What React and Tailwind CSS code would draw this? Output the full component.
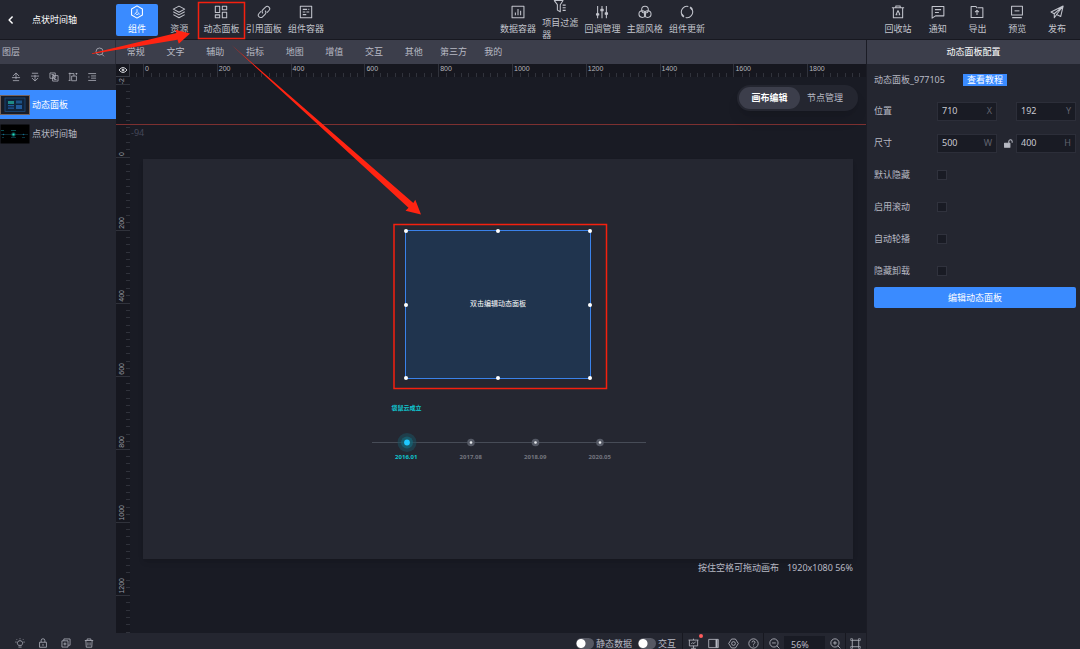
import React from 'react';

function Icon({ className = 'size-3.5', stroke = 1.2, children }) {
  return (
    <svg viewBox="0 0 16 16" className={className + ' shrink-0'} fill="none" stroke="currentColor" strokeWidth={stroke} strokeLinejoin="round" aria-hidden="true">
      {children}
    </svg>
  );
}

const glyphs = {
  component: <><path d="M8 1l6.200 3.500v7L8 15l-6.200-3.500v-7z" /><path d="M8 4.800v3.400M7.600 8L5.300 10.700M9.200 8.500l1.600 2.200M7 10.700h2.500" strokeWidth="1" /></>,
  layers: <><path d="M8 1.3l6.5 3.4L8 8.2 1.500 4.7z" /><path d="M1.500 7.8L8 11.3l6.500-3.500M1.500 11L8 14.5l6.500-3.500" /></>,
  blocks: <><path d="M1.500 1.500h5v7h-5zM9.500 1.500h5v4h-5zM1.500 11.300h5v3.200h-5zM9.500 8.300h5v6.200h-5z" /></>,
  link: <><path d="M6.8 9.6a3 3 0 0 1 0-4.2l2.9-2.9a2.7 2.7 0 0 1 4 3.8l-2.2 2.3" /><path d="M9.2 6.4a3 3 0 0 1 0 4.2l-2.9 2.9a2.700 2.700 0 0 1-4-3.800l2.200-2.300" /></>,
  container: <><path d="M1.500 1.500h13v13h-13z" /><path d="M4.300 5h5M4.300 8h3M8.500 8h3.200M4.300 11h4M10.700 5h1" /></>,
  chart: <><path d="M1.200 1.500h13.600v13H1.200z" /><path d="M5 8.500v3.200M8 4.500v7.200M11 6.500v5.200" /></>,
  filter: <><path d="M1.500 1.800h10L8.300 6.500v8L5 12.700V6.500z" /><path d="M11 7h3.500M11 10h3.500M11 13h3.500" /></>,
  sliders: <><path d="M3 1v14M8 1v14M13 1v14" /><path d="M1.700 10h2.600v1.500H1.700zM6.700 5h2.600v1.500H6.700zM11.700 9h2.600v1.500h-2.600z" fill="currentColor" /></>,
  theme: <><circle cx="8" cy="5.3" r="3.8" /><circle cx="4.900" cy="10.400" r="3.800" /><circle cx="11.100" cy="10.400" r="3.800" /></>,
  update: <><path d="M9.500 1.700A6.500 6.500 0 0 0 2 10.500M6.500 14.300A6.500 6.500 0 0 0 14 5.500" /><path d="M11.500 2.500a6.500 6.500 0 0 1 2.500 3M4.500 13.500a6.500 6.500 0 0 1-2.500-3" strokeWidth="2" /></>,
  recycle: <><path d="M1 3.200h14M5.500 3V1.200h5V3M2.700 3.400v11.200h10.600V3.400" /><path d="M8 6.300l2.200 4.900M8 6.300l-2.200 4.900h1.500M8.800 11.200h1.400" /></>,
  message: <><path d="M1.300 1.800h13.400v10.600H5.200L1.300 15z" /><path d="M4.500 5.300h7M4.500 8.500h4.500" /></>,
  exportBox: <><path d="M9.200 3.200h5.500v11H1.300V1.800h5.500l1.600 1.700" /><path d="M8 11.500V6.300M5.800 8.200L8 6l2.200 2.200" /></>,
  preview: <><path d="M1.800 1.500h12.400v10H1.800zM2.500 14.400h11" /><path d="M5.200 6.700h5.600" /></>,
  send: <><path d="M15 1.200L1.200 8l3.600 2L15 1.200l-2.800 12-4.700-2.300L15 1.200M4.900 10v4.500l2.500-3.400" /></>,
  up: <><path d="M3 6.500L8 1.500l5 5M8 2v9.500M1.500 9h13M3 13.800h10" /></>,
  down: <><path d="M3 9.500l5 5 5-5M8 14V4.500M1.500 6.500h13M3 2h10" /></>,
  group: <><path d="M1.500 1.500h8.500v8.500H1.500zM5.800 5.800h8.700v8.700H5.800z" /><path d="M4 4h3.500v3.500M12 12H8.500V8.500M6 9.800L9.800 6" /></>,
  ungroup: <><path d="M3 1v12.500M1 2.500h8.500v4M5.800 6.500h7.700V14H5.800zM1 13.500h3M13.500 1.500v3M12 2.500h3" /></>,
  list: <><path d="M2 2.500h12.500M6.500 6.300h8M6.500 9.800h8M2 13.500h12.500M2 8h2" /></>,
  search: <><circle cx="7.300" cy="7.200" r="5.600" /><path d="M11 11.500l3.300 3.300" /></>,
  bulb: <><path d="M5.800 11.800C4 10.600 3.600 8.900 3.900 7.500a4.200 4.200 0 0 1 8.200 0c.3 1.400-.1 3.100-1.900 4.300zM5.500 14.500h5M8 .5v1.500M.5 6.500h2M13.500 6.500h2M2.500 2l1 1M13.500 2l-1 1" /></>,
  lock: <><path d="M2.500 6.800h11v8h-11zM5 6.500V4.200a3 3 0 0 1 6 0v2.300M8 9.500v3" /></>,
  copy: <><path d="M1.500 4.500h9.700v10H1.500zM4.500 4.300V1.500h10v10h-3M6.300 7v5M3.800 9.500h5" /></>,
  trash: <><path d="M1.300 4h13.400M5 3.800V1.500h6v2.300M3 4.200l.6 10.500h8.800L13 4.200M6.300 7v5M9.700 7v5" /></>,
  monitor: <><path d="M.8 3h14.400M2 3v8.500h12V3M8 11.500V15M4.500 15h7M4.800 8.700l2-2 1.700 1.500 2.800-3M8 1v2" /></>,
  sidebar: <><path d="M1 2h14v12H1z" /><path d="M12.500 2v12" strokeWidth="3" /></>,
  gear: <><path d="M5.200 1.500h5.600L15 8l-4.200 6.500H5.200L1 8z" /><circle cx="8" cy="8" r="2.700" /></>,
  help: <><circle cx="8" cy="8" r="6.800" /><path d="M5.900 6.400a2.100 2.100 0 1 1 3.100 1.800c-.8.400-1 .800-1 1.500M8 11.200v1.200" /></>,
  zoomOut: <><circle cx="7.200" cy="7.200" r="6" /><path d="M11.500 11.500l3.700 3.700M4.500 7.200h5.400" /></>,
  zoomIn: <><circle cx="7.200" cy="7.200" r="6" /><path d="M11.500 11.500l3.700 3.700M4.500 7.200h5.400M7.200 4.500v5.400" /></>,
  fit: <><path d="M3.300 3.300h9.400v9.400H3.300z" /><path d="M1 1h2.600v2.600H1zM12.400 1H15v2.600h-2.600zM1 12.400h2.600V15H1zM12.400 12.400H15V15h-2.600z" strokeWidth=".9" /></>,
};

function Tool({ icon, label, active, wrap }) {
  return (
    <button className={'flex h-8 flex-col items-center justify-center ' + (active ? 'rounded-xs bg-[#3a8bff] text-white' : 'text-[#c2c4cc]')}>
      <Icon className="size-3.5">{glyphs[icon]}</Icon>
      <span className={'mt-1 leading-3 ' + (wrap ? 'w-9 text-left' : 'whitespace-nowrap')}>{label}</span>
    </button>
  );
}

const leftTools = [['component', '组件'], ['layers', '资源'], ['blocks', '动态面板'], ['link', '引用面板'], ['container', '组件容器']];
const midTools = [['chart', '数据容器'], ['filter', '项目过滤器'], ['sliders', '回调管理'], ['theme', '主题风格'], ['update', '组件更新']];
const rightTools = [['recycle', '回收站'], ['message', '通知'], ['exportBox', '导出'], ['preview', '预览'], ['send', '发布']];
const tabs = ['常规', '文字', '辅助', '指标', '地图', '增值', '交互', '其他', '第三方', '我的'];

function Header() {
  return (
    <header className="flex h-10 shrink-0 items-center overflow-hidden border-b border-[#171820] bg-[#242630]">
      <div className="flex w-[116px] shrink-0 items-center text-white">
        <button aria-label="返回" className="ml-1 flex size-3.5 items-center justify-center">
          <Icon className="size-2.5" stroke={2.4}><path d="M10.500 2.500L5 8l5.500 5.500" /></Icon>
        </button>
        <h1 className="ml-3.5">点状时间轴</h1>
      </div>
      <div className="flex grow justify-between pr-[3px]">
        <div className="grid w-[211px] grid-cols-5">
          {leftTools.map(([icon, label], i) => <Tool key={label} icon={icon} label={label} active={i === 0} />)}
        </div>
        <div className="grid w-[211px] grid-cols-5">
          {midTools.map(([icon, label]) => <Tool key={label} icon={icon} label={label} wrap={icon === 'filter'} />)}
        </div>
        <div className="grid w-[199px] grid-cols-5">
          {rightTools.map(([icon, label]) => <Tool key={label} icon={icon} label={label} />)}
        </div>
      </div>
    </header>
  );
}

function PanelThumb() {
  return (
    <svg viewBox="0 0 30 20" className="h-5 w-[30px] shrink-0" aria-hidden="true">
      <rect x=".5" y=".5" width="29" height="19" fill="#181b25" stroke="#75625c" />
      <rect x="5" y="3" width="20" height="13.500" fill="#10233c" stroke="#1c4a7c" strokeWidth=".8" />
      <path d="M8 6h6v3H8z" fill="#1f8a86" />
      <path d="M16 5.500h6v3h-6z" fill="#1c5286" />
      <path d="M8 10h6v1.300H8zM8 12.500h6v1.300H8zM16 10h6v4h-6z" fill="#225a9c" />
    </svg>
  );
}

function TimelineThumb() {
  return (
    <svg viewBox="0 0 30 20" className="h-5 w-[30px] shrink-0" aria-hidden="true">
      <rect x=".5" y=".5" width="29" height="19" fill="#000" />
      <path d="M1 10.500h27" stroke="#10343c" strokeWidth=".8" />
      <path d="M11 6.500h5M1 6.500h3" stroke="#0b4d50" strokeWidth="1" />
      <path d="M11 13.500h5M22 13.500h3M2 13.500h2" stroke="#0a3540" strokeWidth="1" />
      <circle cx="13.500" cy="10.500" r="2.200" fill="#0b4c4c" />
      <circle cx="13.500" cy="10.500" r="1.100" fill="#1fe0c0" />
      <circle cx="3.500" cy="10.500" r=".8" fill="#146a90" />
      <circle cx="23.500" cy="10.500" r=".8" fill="#146a90" />
    </svg>
  );
}

function LayerPanel() {
  return (
    <aside className="flex w-[116px] shrink-0 flex-col bg-[#242630]">
      <div className="flex h-6 items-center justify-between border-r border-[#2b2d38] bg-[#3c3e4b] pr-2.5 pl-0.5">
        <h2>图层</h2>
        <button aria-label="搜索"><Icon className="size-2.5">{glyphs.search}</Icon></button>
      </div>
      <div className="flex h-[26px] items-center gap-[9px] pl-[11px]">
        {[['up', '上移'], ['down', '下移'], ['group', '成组'], ['ungroup', '取消成组'], ['list', '列表']].map(([icon, label]) => (
          <button key={icon} aria-label={label}><Icon className="size-2.5">{glyphs[icon]}</Icon></button>
        ))}
      </div>
      <button className="flex h-[29px] items-center gap-0.5 bg-[#3a8bff] text-white"><PanelThumb />动态面板</button>
      <button className="flex h-[30px] items-center gap-0.5"><TimelineThumb />点状时间轴</button>
      <div className="mt-auto flex gap-[13px] pb-px pl-[15px]">
        {[['bulb', '显示'], ['lock', '锁定'], ['copy', '复制'], ['trash', '删除']].map(([icon, label]) => (
          <button key={icon} aria-label={label}><Icon className="size-2.5">{glyphs[icon]}</Icon></button>
        ))}
      </div>
    </aside>
  );
}

const subTicks = [1, 2, 3, 4, 5, 6, 7, 8, 9];

function HorizontalRuler() {
  return (
    <div className="flex h-[13px] shrink-0 overflow-hidden bg-[#16171f] font-[Liberation_Sans,sans-serif] text-[7px] text-[#b5b6bc]">
      <div className="flex w-3.5 shrink-0 items-center justify-center border-r border-b border-[#3a3c46] text-[#d0d1d6]">
        <Icon className="h-2 w-2.5" stroke={2}><path d="M0 8q8-10 16 0-8 10-16 0z" /><circle cx="8" cy="8" r="2" fill="currentColor" /></Icon>
      </div>
      <div className="flex w-[13px] shrink-0 items-end justify-center"><i className="h-1 w-px bg-[#30323b]" /></div>
      {[0, 200, 400, 600, 800, 1000, 1200, 1400, 1600, 1800].map((n) => (
        <div key={n} className="flex shrink-0 flex-col justify-between border-l border-[#30323b]" style={{ width: 200 * 0.369 }}>
          <span className="pl-px leading-[9px]">{n}</span>
          <div className="grid h-1 grid-cols-10">
            <i />
            {subTicks.map((t) => <i key={t} className="border-l border-[#30323b]" />)}
          </div>
        </div>
      ))}
    </div>
  );
}

function VerticalRuler() {
  return (
    <div className="flex w-3.5 shrink-0 flex-col overflow-hidden bg-[#16171f] font-[Liberation_Sans,sans-serif] text-[7px] text-[#9a9ba3]">
      <div className="flex h-2 shrink-0 items-end overflow-hidden border-b border-[#30323b]">
        <span className="rotate-180 pr-px leading-[9px] [writing-mode:vertical-rl]">-2</span>
      </div>
      {[0, 200, 400, 600, 800, 1000, 1200].map((n) => (
        <div key={n} className="flex shrink-0 items-end justify-between border-b border-[#30323b]" style={{ height: 200 * 0.365 }}>
          <span className="rotate-180 pt-px pr-px leading-[9px] [writing-mode:vertical-rl]">{n}</span>
          <div className="grid h-full w-1 grid-rows-10">
            {subTicks.map((t) => <i key={t} className="border-b border-[#30323b]" />)}
          </div>
        </div>
      ))}
      <div className="grid shrink-0 grid-rows-10 justify-end" style={{ height: 200 * 0.365 }}>
        {subTicks.map((t) => <i key={t} className="w-1 border-b border-[#30323b]" />)}
      </div>
    </div>
  );
}

const handle = 'absolute size-1 rounded-full bg-white';

function DynamicPanel() {
  return (
    <div className="absolute top-[71px] left-[262px] flex h-[149px] w-[186px] items-center justify-center border border-[#3a82ea] bg-[#20344e] text-[7px] text-white">
      双击编辑动态面板
      <i className={handle + ' -top-0.5 -left-0.5'} />
      <i className={handle + ' -top-0.5 left-1/2 -translate-x-1/2'} />
      <i className={handle + ' -top-0.5 -right-0.5'} />
      <i className={handle + ' top-1/2 -left-0.5 -translate-y-1/2'} />
      <i className={handle + ' top-1/2 -right-0.5 -translate-y-1/2'} />
      <i className={handle + ' -bottom-0.5 -left-0.5'} />
      <i className={handle + ' -bottom-0.5 left-1/2 -translate-x-1/2'} />
      <i className={handle + ' -right-0.5 -bottom-0.5'} />
    </div>
  );
}

function Timeline() {
  return (
    <div className="absolute top-[245px] left-[229px] w-[274px] text-[6px] font-bold">
      <div className="grid w-[262px] grid-cols-4 pl-0.5 text-center leading-[9px] text-[#10c6d0]"><span>袋鼠云成立</span></div>
      <div className="mt-[19px] flex h-5 items-center">
        <svg viewBox="0 0 274 20" className="h-5 w-full" aria-hidden="true">
          <path d="M0 10.500h274" stroke="#474c57" strokeWidth="1.200" />
          <circle cx="35" cy="10.500" r="9.500" fill="#1b5260" opacity=".55" />
          <circle cx="35" cy="10.500" r="6" fill="#156678" opacity=".7" />
          <circle cx="35" cy="10.500" r="2.900" fill="#1fc8ff" />
          {[99, 163.5, 228].map((x) => (
            <g key={x}>
              <circle cx={x} cy="10.500" r="3.800" fill="#555965" />
              <circle cx={x} cy="10.500" r="1.300" fill="#e8eaee" />
            </g>
          ))}
        </svg>
      </div>
      <div className="mt-px grid w-[260px] grid-cols-4 pl-0.5 text-center leading-[9px] text-[#74767f]">
        <span className="text-[#10c6d0]">2016.01</span><span>2017.08</span><span>2018.09</span><span>2020.05</span>
      </div>
    </div>
  );
}

function Workspace() {
  return (
    <div className="relative flex min-h-0 flex-1 flex-col">
      <HorizontalRuler />
      <div className="flex min-h-0 flex-1">
        <VerticalRuler />
        <div className="min-w-0 flex-1 overflow-hidden bg-[#191b24] px-[13px] pt-[82px]">
          <div className="relative h-[400px] w-[710px] bg-[#252731] shadow-md">
            <DynamicPanel />
            <Timeline />
          </div>
          <p className="mt-[3px] text-right leading-3"><span>按住空格可拖动画布</span><span className="ml-2">1920x1080 56%</span></p>
        </div>
      </div>
      <div className="absolute inset-x-0 top-[60px] h-px bg-[#7c3030]" />
      <span className="absolute top-[63px] left-[15px] leading-3 text-[#454859]">-94</span>
      <div className="absolute top-[21px] right-2 flex h-[26px] items-center rounded-full bg-[#242630] p-0.5 shadow-lg">
        <button className="h-[22px] w-[61px] rounded-full bg-[#3c3e4b] font-bold text-white">画布编辑</button>
        <button className="h-[22px] w-14 pr-1.5">节点管理</button>
      </div>
    </div>
  );
}

function Toggle({ label }) {
  return (
    <label className="flex items-center gap-0.5">
      <input type="checkbox" className="h-[11px] w-[18px] appearance-none rounded-full bg-[#565863] bg-[radial-gradient(circle_at_5px_50%,#fff_4px,transparent_5px)]" />
      {label}
    </label>
  );
}

function StatusBar() {
  const iconBtn = 'flex w-5 items-center justify-center';
  return (
    <footer className="h-4 shrink-0 overflow-hidden bg-[#242630]">
      <div className="flex h-[21px] items-stretch justify-end pr-px">
        <div className="flex items-center gap-1.5 pr-1.5"><Toggle label="静态数据" /><Toggle label="交互" /></div>
        <div className="flex border-l border-[#171820]">
          <button aria-label="大屏" className={iconBtn + ' relative'}>
            <Icon className="size-[11px]">{glyphs.monitor}</Icon>
            <i className="absolute top-px right-0 size-1 rounded-full bg-[#ff5c5c]" />
          </button>
          <button aria-label="侧栏" className={iconBtn}><Icon className="size-[11px]">{glyphs.sidebar}</Icon></button>
          <button aria-label="设置" className={iconBtn}><Icon className="size-[11px]">{glyphs.gear}</Icon></button>
          <button aria-label="帮助" className={iconBtn}><Icon className="size-[11px]">{glyphs.help}</Icon></button>
        </div>
        <div className="flex border-l border-[#171820]">
          <button aria-label="缩小" className={iconBtn}><Icon className="size-[11px]">{glyphs.zoomOut}</Icon></button>
          <input aria-label="缩放比例" defaultValue="56%" className="mt-[3px] h-4 w-[41px] bg-[#191b24] pl-[7px]" />
          <button aria-label="放大" className={iconBtn}><Icon className="size-[11px]">{glyphs.zoomIn}</Icon></button>
        </div>
        <button aria-label="适应画布" className={iconBtn + ' border-l border-[#171820]'}><Icon className="size-[11px]">{glyphs.fit}</Icon></button>
      </div>
    </footer>
  );
}

function NumberField({ unit, value }) {
  return (
    <label className="flex h-[19px] w-[60px] items-center justify-between border border-[#2c2e39] bg-[#191b24] px-1">
      <input defaultValue={value} className="w-8 bg-transparent text-[#c9cad1] outline-none" />
      <span className="text-[#61636e]">{unit}</span>
    </label>
  );
}

function ConfigPanel() {
  return (
    <aside className="w-[214px] shrink-0 border-l border-[#1b1c25] bg-[#242630]">
      <h2 className="flex h-6 items-center justify-center bg-[#3c3e4b] text-white">动态面板配置</h2>
      <div className="px-[7px] pr-1">
        <div className="flex h-[31px] items-center">
          <span>动态面板_977105</span>
          <a href="#guide" className="ml-[18px] bg-[#3a8bff] px-1 leading-3 text-white">查看教程</a>
        </div>
        <div className="flex h-8 items-center">
          <span className="w-[63px]">位置</span>
          <NumberField unit="X" value="710" />
          <span className="grow" />
          <NumberField unit="Y" value="192" />
        </div>
        <div className="flex h-8 items-center">
          <span className="w-[63px]">尺寸</span>
          <NumberField unit="W" value="500" />
          <button aria-label="锁定比例" className="flex grow justify-center pl-1">
            <Icon className="size-[9px]" stroke={1.8}><path d="M1 7.500h9.500v7H1z" fill="currentColor" /><path d="M8.500 7.500V4.500a3 3 0 0 1 6 0v2" /></Icon>
          </button>
          <NumberField unit="H" value="400" />
        </div>
        {['默认隐藏', '启用滚动', '自动轮播', '隐藏卸载'].map((label) => (
          <label key={label} className="flex h-8 items-center">
            <span className="w-[63px]">{label}</span>
            <input type="checkbox" className="size-2.5 appearance-none border border-[#30323d] bg-[#191b24]" />
          </label>
        ))}
        <button className="h-[21px] w-full rounded-xs bg-[#3a8bff] text-white">编辑动态面板</button>
      </div>
    </aside>
  );
}

function Callouts() {
  return (
    <svg className="pointer-events-none absolute top-0 left-0 h-[400px] w-[640px]" viewBox="0 0 640 400" aria-hidden="true">
      <g fill="none" stroke="#f5200f" strokeWidth="1.500">
        <rect x="198.500" y="2.500" width="46" height="36" />
        <rect x="394" y="224.500" width="212.500" height="164" />
      </g>
      <g fill="#ff2412">
        <path d="M92 53.300v.8L177.500 39.800l1.300 4L190 33.500l-14.700-3.800 1.200 3.300z" />
        <path d="M231 44.500L413.300 203l2-3.200L421 214.500l-15.500-3.800 3-3z" />
      </g>
    </svg>
  );
}

export default function App() {
  return (
    <div className="relative flex h-screen flex-col overflow-hidden bg-[#191b24] font-['Noto_Sans','Noto_Sans_CJK_SC',sans-serif] text-[9px] text-[#b8bac4]">
      <Header />
      <div className="flex min-h-0 flex-1">
        <LayerPanel />
        <main className="flex min-w-0 flex-1 flex-col">
          <nav className="h-6 shrink-0 bg-[#3c3e4b]">
            <div className="grid h-full w-[397px] grid-cols-10">
              {tabs.map((t) => <button key={t}>{t}</button>)}
            </div>
          </nav>
          <Workspace />
          <StatusBar />
        </main>
        <ConfigPanel />
      </div>
      <Callouts />
    </div>
  );
}
